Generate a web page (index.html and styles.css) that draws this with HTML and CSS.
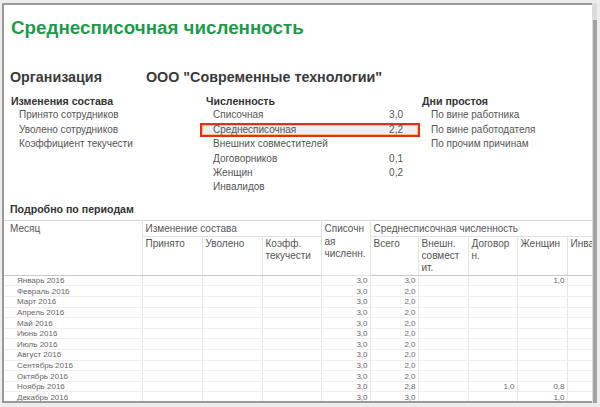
FILE: index.html
```html
<!DOCTYPE html>
<html lang="ru">
<head>
<meta charset="utf-8">
<title>Среднесписочная численность</title>
<link rel="stylesheet" href="styles.css">
</head>
<body>
<div class="window">
  <div class="frame">
    <div class="content">
      <h1 class="title">Среднесписочная численность</h1>
      <div class="org">
        <span class="org-label">Организация</span>
        <span class="org-name">ООО "Современные технологии"</span>
      </div>
      <div class="stats">
        <div class="col col-changes">
          <div class="head">Изменения состава</div>
          <div class="item">Принято сотрудников</div>
          <div class="item">Уволено сотрудников</div>
          <div class="item">Коэффициент текучести</div>
        </div>
        <div class="col col-count">
          <div class="head">Численность</div>
          <div class="item"><span>Списочная</span><span class="val">3,0</span></div>
          <div class="item item-selected"><span>Среднесписочная</span><span class="val">2,2</span></div>
          <div class="item"><span>Внешних совместителей</span><span class="val"></span></div>
          <div class="item"><span>Договорников</span><span class="val">0,1</span></div>
          <div class="item"><span>Женщин</span><span class="val">0,2</span></div>
          <div class="item"><span>Инвалидов</span><span class="val"></span></div>
        </div>
        <div class="col col-idle">
          <div class="head">Дни простоя</div>
          <div class="item">По вине работника</div>
          <div class="item">По вине работодателя</div>
          <div class="item">По прочим причинам</div>
        </div>
      </div>
      <div class="section-title">Подробно по периодам</div>
      <table class="report">
        <colgroup>
          <col class="c-month"><col class="c-60"><col class="c-60"><col class="c-59"><col class="c-49"><col class="c-48"><col class="c-50"><col class="c-49"><col class="c-50"><col class="c-60">
        </colgroup>
        <thead>
          <tr class="h1">
            <th rowspan="2" class="th-month">Месяц</th>
            <th colspan="3">Изменение состава</th>
            <th rowspan="2" class="th-list">Списочн<br>ая<br>численн.</th>
            <th colspan="5">Среднесписочная численность</th>
          </tr>
          <tr class="h2">
            <th>Принято</th>
            <th>Уволено</th>
            <th>Коэфф.<br>текучести</th>
            <th>Всего</th>
            <th>Внешн.<br>совмест<br>ит.</th>
            <th>Договор<br>н.</th>
            <th>Женщин</th>
            <th>Инвалид</th>
          </tr>
        </thead>
        <tbody>
          <tr><td class="m">Январь 2016</td><td></td><td></td><td></td><td>3,0</td><td>3,0</td><td></td><td></td><td>1,0</td><td></td></tr>
          <tr><td class="m">Февраль 2016</td><td></td><td></td><td></td><td>3,0</td><td>2,0</td><td></td><td></td><td></td><td></td></tr>
          <tr><td class="m">Март 2016</td><td></td><td></td><td></td><td>3,0</td><td>2,0</td><td></td><td></td><td></td><td></td></tr>
          <tr><td class="m">Апрель 2016</td><td></td><td></td><td></td><td>3,0</td><td>2,0</td><td></td><td></td><td></td><td></td></tr>
          <tr><td class="m">Май 2016</td><td></td><td></td><td></td><td>3,0</td><td>2,0</td><td></td><td></td><td></td><td></td></tr>
          <tr><td class="m">Июнь 2016</td><td></td><td></td><td></td><td>3,0</td><td>2,0</td><td></td><td></td><td></td><td></td></tr>
          <tr><td class="m">Июль 2016</td><td></td><td></td><td></td><td>3,0</td><td>2,0</td><td></td><td></td><td></td><td></td></tr>
          <tr><td class="m">Август 2016</td><td></td><td></td><td></td><td>3,0</td><td>2,0</td><td></td><td></td><td></td><td></td></tr>
          <tr><td class="m">Сентябрь 2016</td><td></td><td></td><td></td><td>3,0</td><td>2,0</td><td></td><td></td><td></td><td></td></tr>
          <tr><td class="m">Октябрь 2016</td><td></td><td></td><td></td><td>3,0</td><td>2,0</td><td></td><td></td><td></td><td></td></tr>
          <tr><td class="m">Ноябрь 2016</td><td></td><td></td><td></td><td>3,0</td><td>2,8</td><td></td><td>1,0</td><td>0,8</td><td></td></tr>
          <tr><td class="m">Декабрь 2016</td><td></td><td></td><td></td><td>3,0</td><td>3,0</td><td></td><td></td><td>1,0</td><td></td></tr>
        </tbody>
      </table>
    </div>
    <div class="scrollbar"><div class="thumb"></div></div>
  </div>
</div>
</body>
</html>
```
FILE: styles.css
```css
* { box-sizing: border-box; }
html, body { margin: 0; padding: 0; }
body {
  width: 600px;
  height: 407px;
  overflow: hidden;
  background: #ededed;
  font-family: "Liberation Sans", Arial, sans-serif;
  color: #333;
}
.window {
  width: 600px;
  height: 407px;
  padding: 3px 3px 4px 2px;
}
.frame {
  display: flex;
  height: 400px;
  background: #fff;
}
.content {
  flex: 1;
  min-width: 0;
  overflow: hidden;
  border-left: 2px solid #9a9a9a;
  border-top: 2px solid #9a9a9a;
  border-bottom: 2px solid #9a9a9a;
  background: #fff;
}
.scrollbar {
  width: 5px;
  background: #dcdcdc;
  display: flex;
  flex-direction: column;
}
.thumb {
  margin-top: 17px;
  margin-left: 1px;
  flex: 1;
  background: #a2a2a2;
}
.title {
  margin: 11px 0 0 0;
  padding-left: 7px;
  font-size: 18.8px;
  line-height: 24px;
  font-weight: bold;
  color: #1e9a4b;
}
.org {
  display: grid;
  grid-template-columns: 136px auto;
  margin-top: 28px;
  padding-left: 6px;
  font-size: 14.3px;
  line-height: 18px;
  font-weight: bold;
  color: #3a3a3a;
}
.stats {
  display: grid;
  grid-template-columns: 196px 220px 1fr;
  margin-top: 8px;
  font-size: 10px;
  line-height: 14.4px;
}
.head {
  font-weight: bold;
  font-size: 10.6px;
  color: #333;
}
.item { color: #555; }
.col-changes .head { padding-left: 7px; }
.col-changes .item { padding-left: 15px; }
.col-count .head { padding-left: 6px; }
.col-count .item {
  display: flex;
  justify-content: space-between;
  padding-left: 13px;
  padding-right: 17px;
}
.col-idle .head { padding-left: 2px; }
.col-idle .item { padding-left: 11px; }
.item-selected {
  background: #eeeeee;
  box-shadow: inset 0 0 0 2px #e2301f, inset 0 0 0 3px #f6c27a;
}
.section-title {
  margin-top: 7px;
  padding-left: 6px;
  font-size: 10.6px;
  line-height: 14.4px;
  font-weight: bold;
  color: #333;
}
.report {
  margin-top: 4px;
  border-collapse: collapse;
  table-layout: fixed;
  width: 623px;
  font-size: 10px;
  color: #555;
}
.c-month { width: 138px; }
.c-60 { width: 60px; }
.c-59 { width: 59px; }
.c-50 { width: 50px; }
.c-49 { width: 49px; }
.c-48 { width: 48px; }
.report th {
  font-weight: normal;
  text-align: left;
  vertical-align: top;
  line-height: 12.4px;
  padding: 1px 2px 0 3px;
  border: 1px solid #e2e2e2;
  white-space: nowrap;
  overflow: hidden;
}
.report tr.h1 { height: 15px; }
.report tr.h2 { height: 39px; }
.report tr.h1 th { border-top: 1px solid #d6d6d6; padding-top: 2px; }
.report tr.h2 th { border-bottom: 1px solid #c8c8c8; }
.report .th-list { padding-top: 2px; }
.report .th-month { padding-left: 6px; border-left: none; border-bottom: 1px solid #c8c8c8; }
.report td {
  height: 10.6px;
  padding: 0 2px 0 0;
  font-size: 8px;
  line-height: 9px;
  color: #666;
  text-align: right;
  border-left: 1px solid #e6e6e6;
  border-right: 1px solid #e6e6e6;
  border-bottom: 1px solid #efefef;
  white-space: nowrap;
}
.report td.m {
  text-align: left;
  padding-left: 13px;
  border-left: none;
}
```
